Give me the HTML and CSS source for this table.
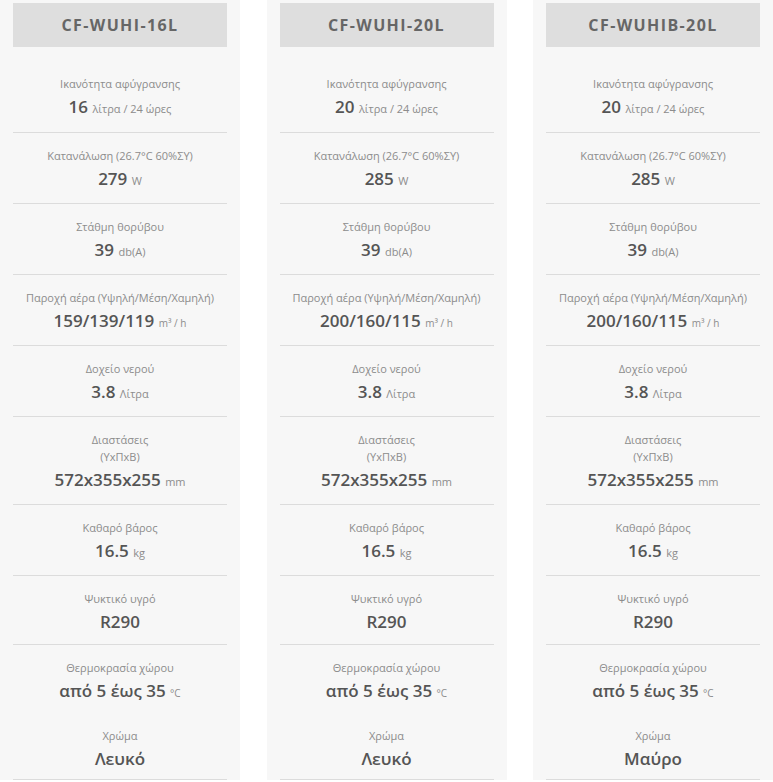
FILE: index.html
```html
<!DOCTYPE html>
<html lang="el">
<head>
<meta charset="utf-8">
<title>Σύγκριση αφυγραντήρων</title>
<link rel="stylesheet" href="styles.css">
</head>
<body>
<div class="grid">
  <section class="col">
    <h2 class="model">CF-WUHI-16L</h2>
    <div class="row first"><div class="label">Ικανότητα αφύγρανσης</div><div class="value">16 <span class="unit">λίτρα / 24 ώρες</span></div></div>
    <div class="row"><div class="label">Κατανάλωση (26.7°C 60%ΣΥ)</div><div class="value">279 <span class="unit">W</span></div></div>
    <div class="row"><div class="label">Στάθμη θορύβου</div><div class="value">39 <span class="unit">db(A)</span></div></div>
    <div class="row"><div class="label">Παροχή αέρα (Υψηλή/Μέση/Χαμηλή)</div><div class="value">159/139/119 <span class="unit small">m³ / h</span></div></div>
    <div class="row"><div class="label">Δοχείο νερού</div><div class="value">3.8 <span class="unit">Λίτρα</span></div></div>
    <div class="row"><div class="label">Διαστάσεις<br>(ΥxΠxΒ)</div><div class="value">572x355x255 <span class="unit">mm</span></div></div>
    <div class="row"><div class="label">Καθαρό βάρος</div><div class="value">16.5 <span class="unit">kg</span></div></div>
    <div class="row"><div class="label">Ψυκτικό υγρό</div><div class="value">R290</div></div>
    <div class="row compact noline"><div class="label">Θερμοκρασία χώρου</div><div class="value">από 5 έως 35 <span class="unit small">°C</span></div></div>
    <div class="row last"><div class="label">Χρώμα</div><div class="value">Λευκό</div></div>
  </section>
  <section class="col">
    <h2 class="model">CF-WUHI-20L</h2>
    <div class="row first"><div class="label">Ικανότητα αφύγρανσης</div><div class="value">20 <span class="unit">λίτρα / 24 ώρες</span></div></div>
    <div class="row"><div class="label">Κατανάλωση (26.7°C 60%ΣΥ)</div><div class="value">285 <span class="unit">W</span></div></div>
    <div class="row"><div class="label">Στάθμη θορύβου</div><div class="value">39 <span class="unit">db(A)</span></div></div>
    <div class="row"><div class="label">Παροχή αέρα (Υψηλή/Μέση/Χαμηλή)</div><div class="value">200/160/115 <span class="unit small">m³ / h</span></div></div>
    <div class="row"><div class="label">Δοχείο νερού</div><div class="value">3.8 <span class="unit">Λίτρα</span></div></div>
    <div class="row"><div class="label">Διαστάσεις<br>(ΥxΠxΒ)</div><div class="value">572x355x255 <span class="unit">mm</span></div></div>
    <div class="row"><div class="label">Καθαρό βάρος</div><div class="value">16.5 <span class="unit">kg</span></div></div>
    <div class="row"><div class="label">Ψυκτικό υγρό</div><div class="value">R290</div></div>
    <div class="row compact noline"><div class="label">Θερμοκρασία χώρου</div><div class="value">από 5 έως 35 <span class="unit small">°C</span></div></div>
    <div class="row last"><div class="label">Χρώμα</div><div class="value">Λευκό</div></div>
  </section>
  <section class="col">
    <h2 class="model">CF-WUHIB-20L</h2>
    <div class="row first"><div class="label">Ικανότητα αφύγρανσης</div><div class="value">20 <span class="unit">λίτρα / 24 ώρες</span></div></div>
    <div class="row"><div class="label">Κατανάλωση (26.7°C 60%ΣΥ)</div><div class="value">285 <span class="unit">W</span></div></div>
    <div class="row"><div class="label">Στάθμη θορύβου</div><div class="value">39 <span class="unit">db(A)</span></div></div>
    <div class="row"><div class="label">Παροχή αέρα (Υψηλή/Μέση/Χαμηλή)</div><div class="value">200/160/115 <span class="unit small">m³ / h</span></div></div>
    <div class="row"><div class="label">Δοχείο νερού</div><div class="value">3.8 <span class="unit">Λίτρα</span></div></div>
    <div class="row"><div class="label">Διαστάσεις<br>(ΥxΠxΒ)</div><div class="value">572x355x255 <span class="unit">mm</span></div></div>
    <div class="row"><div class="label">Καθαρό βάρος</div><div class="value">16.5 <span class="unit">kg</span></div></div>
    <div class="row"><div class="label">Ψυκτικό υγρό</div><div class="value">R290</div></div>
    <div class="row compact noline"><div class="label">Θερμοκρασία χώρου</div><div class="value">από 5 έως 35 <span class="unit small">°C</span></div></div>
    <div class="row last"><div class="label">Χρώμα</div><div class="value">Μαύρο</div></div>
  </section>
</div>
</body>
</html>
```
FILE: styles.css
```css
html, body {
  margin: 0;
  padding: 0;
  background: #ffffff;
}
body {
  font-family: "Open Sans", "Noto Sans", sans-serif;
  color: #555;
}
.grid {
  display: grid;
  grid-template-columns: repeat(3, 240px);
  column-gap: 26.5px;
  width: 773px;
}
.col {
  background: #f7f7f7;
  padding: 3px 13px 0;
  display: flex;
  flex-direction: column;
}
.model {
  margin: 0 0 14px;
  height: 44px;
  display: flex;
  align-items: center;
  justify-content: center;
  background: #dedede;
  color: #666;
  font-size: 16px;
  font-weight: 700;
  letter-spacing: 1.4px;
}
.row {
  text-align: center;
  padding: 14px 0 10px;
  border-bottom: 1px solid #dcdcdc;
}
.row.first {
  padding-bottom: 11px;
}
.row.compact {
  padding-bottom: 7px;
}
.row.last {
  padding-bottom: 8px;
}
.row.noline {
  border-bottom-color: transparent;
}
.label {
  font-size: 11px;
  line-height: 17px;
  color: #8c8c8c;
}
.value {
  margin-top: 3px;
  font-size: 17px;
  line-height: 24px;
  font-weight: 600;
  color: #555;
}
.unit {
  font-size: 11px;
  font-weight: 400;
  color: #8c8c8c;
}
.unit.small {
  font-size: 10px;
}
```
